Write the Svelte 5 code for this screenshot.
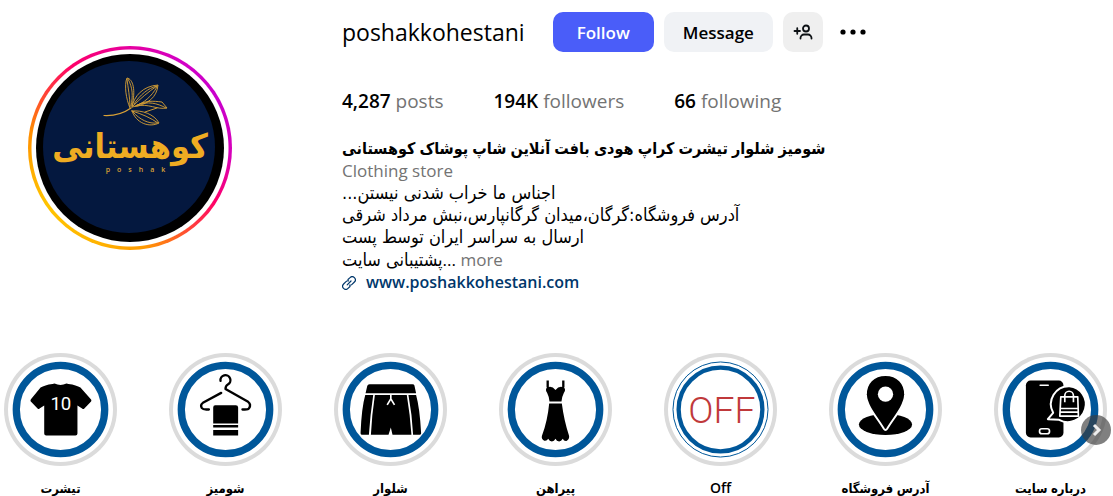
<script lang="ts">
	interface Stat {
		value: string;
		label: string;
	}

	interface Highlight {
		icon: string;
		title: string;
	}

	const stats: Stat[] = [
		{ value: '4,287', label: 'posts' },
		{ value: '194K', label: 'followers' },
		{ value: '66', label: 'following' }
	];

	const bioLines: string[] = [
		'اجناس ما خراب شدنی نیستن...',
		'آدرس فروشگاه:گرگان،میدان گرگانپارس،نبش مرداد شرقی',
		'ارسال به سراسر ایران توسط پست'
	];

	const highlights: Highlight[] = [
		{ icon: 'tshirt', title: 'تیشرت' },
		{ icon: 'hanger', title: 'شومیز' },
		{ icon: 'shorts', title: 'شلوار' },
		{ icon: 'dress', title: 'پیراهن' },
		{ icon: 'off', title: 'Off' },
		{ icon: 'pin', title: 'آدرس فروشگاه' },
		{ icon: 'phone', title: 'درباره سایت' }
	];

	let following = $state(false);
	let strip: HTMLElement;

	function scrollNext(): void {
		strip.scrollBy({ left: 330, behavior: 'smooth' });
	}
</script>

<main class="profile">
	<header class="top">
		<button class="avatar" aria-label="View story">
			<svg viewBox="0 0 188 188" aria-hidden="true">
				<circle cx="94" cy="94" r="94" fill="#000" />
				<circle cx="93" cy="93" r="86" fill="#04183f" />
				<g fill="none" stroke="#d9a136" stroke-width="0.9" stroke-linecap="round">
					<path d="M68 61.500C78 62 88 59 95 54" stroke-width="1.200" />
					<path d="M94 54C90 45 88 31 91 24C97 25 100 36 96 52" />
					<path d="M94 53C94 43 92 34 91 25M95 52C97 42 97 34 92 25" />
					<path d="M96 53C98 42 107 32 122 31C121 43 112 51 96 53Z" />
					<path d="M97 52C104 45 112 38 121 32M98 50C104 41 112 34 121 32M99 52C108 49 115 43 121 33" />
					<path d="M100 52C109 46 117 47 126 48L131 54C121 56 112 49 101 52" />
					<path d="M101 51C112 47 121 49 130 54M109 58L121 54" />
					<path d="M96 57C106 56 118 60 123 69C113 74 100 69 96 57Z" />
					<path d="M96 57C106 60 115 64 122 69M97 58C104 66 113 70 121 69" />
				</g>
				<text class="brand" x="94" y="104" text-anchor="middle">کوهستانی</text>
				<text class="brand-sub" x="103" y="118" text-anchor="middle">poshak</text>
			</svg>
		</button>

		<section class="info">
			<div class="title-row">
				<h2>poshakkohestani</h2>
				<div class="actions">
					<button class="btn primary" onclick={() => (following = !following)}>
						{following ? 'Following' : 'Follow'}
					</button>
					<button class="btn">Message</button>
					<button class="btn square" aria-label="Similar accounts">
						<svg width="20" height="20" viewBox="0 0 20 20" fill="none" stroke="#0c1014" stroke-width="1.800" stroke-linecap="round" aria-hidden="true">
							<circle cx="13" cy="6.500" r="3" />
							<path d="M7.500 16.500V16A3.500 3.500 0 0 1 11 12.500H15A3.500 3.500 0 0 1 18.500 16V16.500M1.500 9H7M4.250 6.250V11.750" />
						</svg>
					</button>
					<button class="more-options" aria-label="Options">
						<svg width="28" height="28" viewBox="0 0 28 28" aria-hidden="true">
							<circle cx="4" cy="14" r="2.600" />
							<circle cx="14" cy="14" r="2.600" />
							<circle cx="24" cy="14" r="2.600" />
						</svg>
					</button>
				</div>
			</div>

			<ul class="stats">
				{#each stats as { value, label }}
					<li><strong>{value}</strong> {label}</li>
				{/each}
			</ul>

			<div class="bio">
				<h1 dir="rtl">شومیز شلوار تیشرت کراپ هودی بافت آنلاین شاپ پوشاک کوهستانی</h1>
				<p class="category">Clothing store</p>
				{#each bioLines as line}
					<p class="fa" dir="rtl">{line}</p>
				{/each}
				<p><bdi class="fa">پشتیبانی سایت</bdi>... <button class="more">more</button></p>
				<a href="http://www.poshakkohestani.com">
					<svg width="14" height="14" viewBox="0 0 14 14" fill="none" stroke="#00376b" stroke-width="1.200" stroke-linecap="round" aria-hidden="true">
						<path d="M5.200 8.800L9 5M6 3.500L8 1.600A3 3 0 0 1 12.400 6L10 8.400A3 3 0 0 1 7.500 9.200M8 10.500L6 12.400A3 3 0 0 1 1.600 8L4 5.600A3 3 0 0 1 6.500 4.800" />
					</svg>
					www.poshakkohestani.com
				</a>
			</div>
		</section>
	</header>

	<section class="highlights">
		<ul class="strip" bind:this={strip}>
			{#each highlights as { icon, title }}
				<li>
					<button class="highlight">
						<span class="ring">
							<svg viewBox="-170 -170 340 340" aria-hidden="true">
								{#if icon === 'off'}
									<circle r="143" fill="#fff" stroke="#00579a" stroke-width="3" />
									<circle r="126" fill="none" stroke="#00579a" stroke-width="13" />
								{:else}
									<circle r="133" fill="#fff" stroke="#00579a" stroke-width="22" />
								{/if}

								{#if icon === 'tshirt'}
									<path d="M-24-77L-18-78Q0-70 18-78L24-77Q48-74 60-66L92-30Q94-27 92-24L71-2Q68 0 65-3L51-12V72Q51 78 45 78H-43Q-49 78-49 72V-12L-63-3Q-66 0-69-3L-90-25Q-91-28-89-31L-60-66Q-48-74-24-77Z" />
									<text class="number" x="1" y="2" text-anchor="middle">10</text>
								{:else if icon === 'hanger'}
									<g fill="none" stroke="#000" stroke-width="7" stroke-linecap="round" stroke-linejoin="round">
										<path d="M-15-86A15 15 0 1 1 7-75Q0-71 0-62L68-23Q78-15 71-4Q69 0 58 0H51" />
										<path d="M-13-50L-68-20Q-77-14-71-4Q-68 0-58 0H-50" />
									</g>
									<path d="M-37-6Q-37-13-31-13H31Q38-13 38-6V42H-37ZM-37 47H38V54H-37ZM-37 62H38V78H-37Z" />
								{:else if icon === 'shorts'}
									<path d="M-63-76H66Q71-76 72-72L77-49H-75L-70-71Q-69-76-63-76ZM-76-44H-52Q-61 15-65 76H-84Q-91 76-90 69Q-87-5-76-44ZM-47-44H49Q59 15 63 76H6L1 54L-6 76H-59Q-56 15-47-44ZM54-44H77Q88-5 92 69Q93 76 86 76H68Q65 15 54-44Z" />
									<path d="M1-44V-32M-10-14L1-32L12-14" fill="none" stroke="#fff" stroke-width="5" />
								{:else if icon === 'dress'}
									<path d="M-27-87H-20V-66H-27ZM20-87H27V-66H20ZM-24-67Q-11-73 0-59Q11-73 24-67Q33-61 25-50Q18-36 18-24H-18Q-18-36-25-50Q-33-61-24-67ZM-19-18H19Q26 35 41 80Q42 90 33 95Q25 96 22 88Q17 96 11 96Q3 96 0 88Q-4 96-11 96Q-18 96-22 88Q-26 96-34 94Q-43 90-41 80Q-24 35-19-18Z" />
								{:else if icon === 'off'}
									<text class="off" x="4" y="41" text-anchor="middle">OFF</text>
								{:else if icon === 'pin'}
									<ellipse cy="45" rx="80" ry="32" />
									<path d="M0-104C36-104 60-78 59-44C57-8 22 28 5 58Q0 65-5 58C-22 28-57-8-59-44C-60-78-36-104 0-104Z" stroke="#fff" stroke-width="6" />
									<circle cy="-46" r="23" fill="#fff" />
								{:else}
									<rect x="-74" y="-87" width="113" height="171" rx="14" />
									<path d="M-31-73H-7" stroke="#fff" stroke-width="5" stroke-linecap="round" />
									<rect x="-33" y="58" width="30" height="15" rx="7" fill="none" stroke="#fff" stroke-width="5" />
									<path d="M57-70A54 54 0 1 1 26 31L-8 29L8 10A54 54 0 0 1 57-70Z" stroke="#fff" stroke-width="6" stroke-linejoin="round" />
									<path d="M31-38H82L84 20H28ZM29-3H83M28 8H84M43-22V-42A13 13 0 0 1 69-42V-22" fill="none" stroke="#fff" stroke-width="5" stroke-linejoin="round" />
								{/if}
							</svg>
						</span>
						<span class="label" class:latin={icon === 'off'} dir="auto">{title}</span>
					</button>
				</li>
			{/each}
		</ul>
		<button class="next" aria-label="Next" onclick={scrollNext}>
			<svg width="30" height="30" viewBox="0 0 30 30" fill="none" stroke="#eee" stroke-width="3" aria-hidden="true">
				<path d="M13 10L18 15L13 20" />
			</svg>
		</button>
	</section>
</main>

<style>
	:global(body) {
		margin: 0;
		background: #fff;
		overflow-x: hidden;
	}

	.profile {
		font-family: 'Open Sans', 'Noto Sans', 'DejaVu Sans Condensed', sans-serif;
		color: #000;
	}

	h1,
	h2,
	p,
	ul {
		margin: 0;
		padding: 0;
		list-style: none;
	}

	button {
		padding: 0;
		border: 0;
		background: none;
		font: inherit;
		color: inherit;
		cursor: pointer;
	}

	svg {
		display: block;
	}

	.top {
		display: flex;
		gap: 110px;
		padding: 12px 28px 0;
	}

	.avatar {
		flex: none;
		box-sizing: border-box;
		width: 204px;
		height: 204px;
		margin-top: 34px;
		padding: 8px;
		border-radius: 50%;
		background:
			radial-gradient(circle, #fff 98px, transparent 99px),
			conic-gradient(#e600a0, #d300c5 30deg, #c800cc 60deg, #d800b8 95deg, #ff0069 122deg, #ff5a2a 150deg, #ff9a00 172deg, #ffb400 200deg, #ffc400 235deg, #ffa800 262deg, #ff8a00 280deg, #ff4a30 300deg, #ff0069 325deg, #e600a0);
	}

	.brand {
		font-family: 'DejaVu Sans Condensed', sans-serif;
		font-size: 34px;
		font-weight: 700;
		fill: #efac22;
	}

	.brand-sub {
		font-size: 7px;
		font-weight: 600;
		letter-spacing: 7px;
		fill: #d9a136;
	}

	.info {
		flex: 1;
		min-width: 0;
	}

	.title-row,
	.actions {
		display: flex;
		align-items: center;
	}

	.title-row {
		gap: 28px;
	}

	.actions {
		gap: 10px;
	}

	h2 {
		font-size: 23px;
		font-weight: 400;
		line-height: 40px;
	}

	.btn {
		height: 40px;
		padding: 0 19px;
		border-radius: 10px;
		background: #f0f2f5;
		font-size: 17px;
		font-weight: 600;
	}

	.btn.primary {
		padding: 0 24px;
		background: #4a5df9;
		color: #fff;
	}

	.btn.square {
		width: 40px;
		padding: 0 10px;
		background: #efefef;
	}

	.more-options {
		margin-left: 6px;
	}

	.stats {
		display: flex;
		gap: 50px;
		margin-top: 36px;
		font-size: 19px;
		line-height: 26px;
		color: #737373;
	}

	.stats strong {
		font-weight: 600;
		color: #000;
	}

	.bio {
		display: flex;
		flex-direction: column;
		align-items: flex-start;
		margin-top: 23px;
		font-size: 17px;
		line-height: 23px;
	}

	h1 {
		font-size: 16px;
		font-weight: 600;
		line-height: 22px;
	}

	.fa {
		font-family: 'DejaVu Sans Condensed', sans-serif;
		font-size: 18px;
		line-height: 22px;
	}

	.category,
	.more {
		color: #737373;
	}

	.bio a {
		display: flex;
		align-items: center;
		gap: 10px;
		color: #00376b;
		font-size: 16px;
		font-weight: 600;
		line-height: 23px;
		text-decoration: none;
	}

	.highlights {
		position: relative;
		margin-top: 59px;
	}

	.strip {
		display: flex;
		gap: 52px;
		padding: 0 4px;
		overflow: hidden;
	}

	.strip li {
		flex: none;
		width: 113px;
	}

	.highlight {
		display: flex;
		flex-direction: column;
		align-items: center;
		gap: 12px;
		width: 100%;
	}

	.ring {
		box-sizing: border-box;
		width: 113px;
		height: 113px;
		border-radius: 50%;
		box-shadow: inset 0 0 0 4px #dbdbdb;
	}

	.label {
		font-size: 13px;
		font-weight: 600;
		line-height: 20px;
		white-space: nowrap;
	}

	.label.latin {
		font-size: 14px;
	}

	.number {
		font-family: Roboto, sans-serif;
		font-size: 56px;
		font-weight: 400;
		fill: #fff;
	}

	.off {
		font-family: Roboto, sans-serif;
		font-size: 112px;
		font-weight: 300;
		fill: #c0393b;
	}

	.next {
		position: absolute;
		top: 62px;
		right: 2px;
		border-radius: 50%;
		background: rgb(60 60 60 / 65%);
	}
</style>
